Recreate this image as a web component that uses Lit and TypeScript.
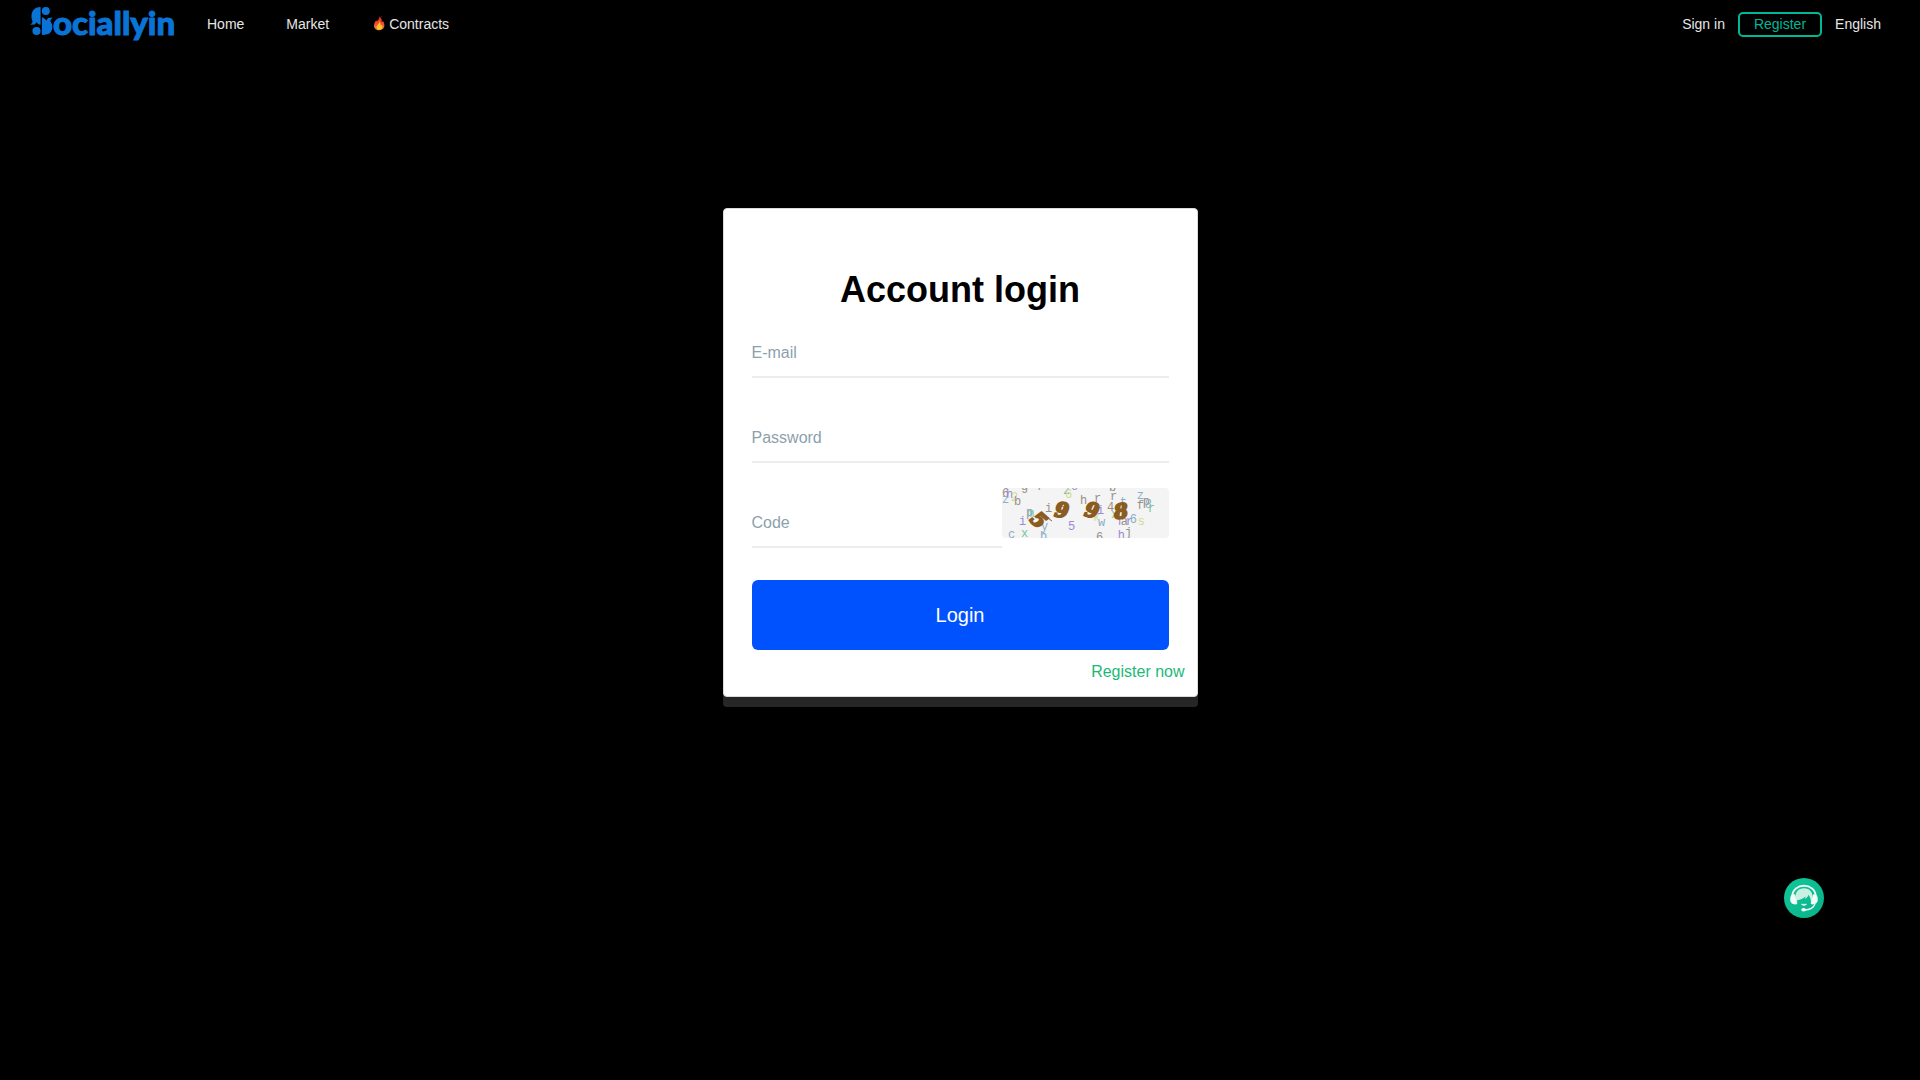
import { LitElement, html, svg, css } from "lit";
import { customElement } from "lit/decorators.js";

type Glyph = [char: string, x: number, y: number, color: string];
type Digit = [char: string, x: number, y: number, angle: number];

const GREY = "#979089";
const PURPLE = "#9c8ad6";
const BLUE = "#8aaec8";
const GREEN = "#76c798";
const YELLOW = "#d2da93";

const NOISE: Glyph[] = [
  ["6", 0, 9, GREY], ["h", 4, 10, PURPLE], ["z", 0, 15, BLUE], ["2", 9, 13, YELLOW],
  ["b", 12, 17, GREY], ["g", 19, 2, GREY], ["r", 35, 2, GREY], ["z", 61, 6, BLUE],
  ["6", 63, 10, YELLOW], ["o", 69, 2, PURPLE], ["h", 78, 16, GREY], ["r", 92, 14, GREY],
  ["r", 108, 12, GREY], ["b", 107, 3, GREY], ["z", 135, 11, BLUE], ["f", 135, 21, GREY],
  ["p", 141, 17, GREY], ["8", 143, 20, BLUE], ["r", 146, 24, GREEN], ["i", 43, 24, GREY],
  ["p", 24, 28, PURPLE], ["m", 25, 29, GREEN], ["i", 17, 37, PURPLE], ["5", 66, 42, PURPLE],
  ["w", 96, 38, BLUE], ["k", 91, 33, YELLOW], ["4", 105, 23, GREY], ["x", 109, 30, GREEN],
  ["t", 118, 18, BLUE], ["f", 115, 37, PURPLE], ["a", 119, 37, GREY], ["r", 124, 37, PURPLE],
  ["6", 128, 35, BLUE], ["s", 136, 37, YELLOW], ["c", 6, 50, BLUE], ["x", 19, 49, GREEN],
  ["b", 38, 52, BLUE], ["y", 39, 42, BLUE], ["6", 94, 53, GREY], ["h", 116, 51, PURPLE],
  ["j", 123, 48, GREY], ["l", 58, 27, PURPLE], ["i", 95, 26, PURPLE],
];

const DIGITS: Digit[] = [
  ["5", 37, 32, 42],
  ["9", 60, 22, 8],
  ["9", 90, 22, 12],
  ["8", 119, 23, -8],
];

@customElement("app-logo")
export class AppLogo extends LitElement {
  static styles = css`
    :host { display: block; }
    svg { display: block; }
    .word {
      font-family: Lato, "Open Sans", sans-serif;
      font-size: 33px;
      font-weight: 900;
      fill: #0a74d6;
      stroke: #0a74d6;
      stroke-width: 1;
    }
  `;
  render() {
    return html`
      <svg width="150" height="48" viewBox="0 0 150 48" role="img" aria-label="Sociallyin">
        <g fill="#0a74d6">
          <path d="M10.6 7V24.8C8.6 24.4 7.4 23.4 6.2 22.2L5 24.4 0 24.8C1.6 23.6 2.3 22.8 2.6 21.4C1 18.3 0.9 13.8 3 10.6C4.8 8 7.4 7 10.6 7Z" />
          <circle cx="15.8" cy="11" r="4" />
          <circle cx="6.5" cy="31" r="4.1" />
          <path d="M11.9 17.2C14 17.6 15.2 19 16.4 20.4L18 18 23 17.6C21.4 18.8 20.6 19.8 20.3 21.2C22.8 24 23 29 20.8 32C19 34.3 16.4 35 11.9 35Z" />
        </g>
        <text class="word" x="23" y="35">ociallyin</text>
      </svg>
    `;
  }
}

@customElement("captcha-image")
export class CaptchaImage extends LitElement {
  static styles = css`
    :host { display: block; }
    svg { display: block; width: 100%; height: 50px; background: #f4f4f4; border-radius: 4px; }
    .noise { font-family: "Liberation Mono", monospace; font-size: 12px; }
    .digit {
      font-family: "DejaVu Serif", serif;
      font-size: 20px;
      font-weight: 700;
      font-style: italic;
      fill: #8a5c20;
      stroke: #8a5c20;
      stroke-width: 2;
      text-anchor: middle;
    }
  `;
  render() {
    return html`
      <svg viewBox="0 0 167 50" role="img" aria-label="Verification code">
        ${NOISE.map(([c, x, y, color]) => svg`<text class="noise" x=${x} y=${y} fill=${color}>${c}</text>`)}
        ${DIGITS.map(([c, x, y, a]) => svg`<text class="digit" x="0" y="7" transform="translate(${x} ${y}) rotate(${a})">${c}</text>`)}
        <path d="M42 27L50 33" stroke="#8a5c20" />
      </svg>
    `;
  }
}

@customElement("app-root")
export class AppRoot extends LitElement {
  static styles = css`
    :host {
      display: flex;
      flex-direction: column;
      min-height: 100vh;
      background: #000;
      font-family: "Liberation Sans", Arial, sans-serif;
      color: #e6e6e6;
    }
    * { box-sizing: border-box; }
    a { color: inherit; text-decoration: none; }
    .header {
      display: flex;
      align-items: center;
      justify-content: space-between;
      height: 48px;
      padding: 0 39px 0 30px;
      font-size: 14px;
      line-height: 21px;
    }
    .brand, .nav, .account { display: flex; align-items: center; }
    .brand { gap: 27px; }
    .nav { gap: 42px; }
    .account { gap: 13px; }
    .hot { display: flex; align-items: center; }
    .register {
      padding: 0 14px;
      border: 2px solid #00b897;
      border-radius: 5px;
      color: #00b897;
    }
    .main { display: flex; justify-content: center; padding: 160px 16px 48px; }
    .card {
      width: 100%;
      max-width: 475px;
      padding: 53px 0 12px;
      border: 1px solid #d8dcdc;
      border-radius: 4px;
      background: #fff;
      box-shadow: 0 10px 0 #262626;
    }
    .title {
      margin: 0;
      color: #000;
      font-size: 36px;
      line-height: 56px;
      text-align: center;
    }
    .form { display: flex; flex-direction: column; gap: 25px; padding: 0 28px; }
    .field {
      width: 100%;
      height: 60px;
      padding: 12px 0 0;
      border: 0;
      border-bottom: 2px solid #ededed;
      border-radius: 0;
      outline: 0;
      background: transparent;
      color: #000;
      font: 16px "Liberation Sans", Arial, sans-serif;
    }
    .field::placeholder { color: #8c9fad; opacity: 1; }
    .code { display: grid; grid-template-columns: 3fr 2fr; align-items: start; }
    .submit {
      height: 70px;
      margin-top: 7px;
      border: 0;
      border-radius: 6px;
      background: #0052ff;
      color: #fff;
      font: 20px "Liberation Sans", Arial, sans-serif;
    }
    .more {
      padding: 10px 12px 0;
      color: #1bb978;
      font-size: 16px;
      line-height: 24px;
      text-align: right;
    }
    .support {
      position: fixed;
      right: 96px;
      bottom: 162px;
      padding: 0;
      border: 0;
      background: none;
    }
    .support svg { display: block; }
  `;

  render() {
    return html`
      <header class="header">
        <div class="brand">
          <a href="#"><app-logo></app-logo></a>
          <nav class="nav">
            <a href="#">Home</a>
            <a href="#">Market</a>
            <a class="hot" href="#">
              <svg width="18" height="18" viewBox="0 0 18 18" aria-hidden="true">
                <defs>
                  <linearGradient id="flame" x1="0" y1="0" x2="0" y2="1">
                    <stop offset="0" stop-color="#d9281b" />
                    <stop offset=".6" stop-color="#f4512c" />
                    <stop offset="1" stop-color="#f59a2c" />
                  </linearGradient>
                </defs>
                <path fill="url(#flame)" d="M8.3 1.2C8.6 3.4 7.5 4.6 6.2 6C5.9 6.5 5.6 6.5 5.2 5.3C3.9 7 3 8.7 3 10.7C3 13.4 5.3 15.2 8.2 15.2C11.3 15.2 13.4 13.2 13.4 10.3C13.4 8.4 12.7 7 11.8 5.8C11.6 6.8 11.3 7.2 10.8 7.3C11.1 4.8 10.2 2.5 8.3 1.2ZM10.2 1L11.2 0.7L11 2Z" />
                <path fill="#fbc52f" d="M8.5 6.2C8.7 8.2 6 9.4 5.7 11.8C5.5 13.7 6.6 14.7 8.3 14.7C10.2 14.7 11.5 13.5 11.2 11.5C11 10.6 10.6 10 10.2 9.6C10.1 10.3 9.9 10.6 9.5 10.8C9.8 9 9.4 7.2 8.5 6.2Z" />
              </svg>
              <span>Contracts</span>
            </a>
          </nav>
        </div>
        <div class="account">
          <a href="#">Sign in</a>
          <a class="register" href="#">Register</a>
          <a href="#">English</a>
        </div>
      </header>

      <main class="main">
        <section class="card">
          <h1 class="title">Account login</h1>
          <form class="form" @submit=${(e: Event) => e.preventDefault()}>
            <input class="field" type="email" placeholder="E-mail" aria-label="E-mail" />
            <input class="field" type="password" placeholder="Password" aria-label="Password" />
            <div class="code">
              <input class="field" type="text" placeholder="Code" aria-label="Code" />
              <captcha-image></captcha-image>
            </div>
            <button class="submit" type="submit">Login</button>
          </form>
          <div class="more"><a href="#">Register now</a></div>
        </section>
      </main>

      <button class="support" type="button" aria-label="Customer support">
        <svg width="40" height="40" viewBox="0 0 40 40" aria-hidden="true">
          <defs>
            <linearGradient id="disc" x1="0" y1="0" x2="1" y2="1">
              <stop offset="0" stop-color="#12c79b" />
              <stop offset="1" stop-color="#08b287" />
            </linearGradient>
          </defs>
          <circle cx="20" cy="20" r="20" fill="url(#disc)" />
          <path d="M8.3 18.5C8.3 4.2 31.7 4.2 31.7 18.5" fill="none" stroke="#e9fbf4" stroke-width="1.8" />
          <path fill="#c9f1e3" d="M11.5 22C10.5 14 14.5 10.2 20 10.2S29.5 14 28.5 22L27 25C27 21 26 19 24.6 16.8C24 18.6 22.6 20.4 20.8 21C21.3 20.2 21.5 19.4 21.5 18.6C19 21 16.5 21.8 13 22.2L13.4 25Z" />
          <path fill="#f2fdf9" d="M7 17.5Q8.6 15.8 11 16.6L13.3 26C10 27.4 6.3 25.4 6.2 21.8Q6.2 19 7 17.5ZM33 17.5Q31.4 15.8 29 16.6L26.7 26C30 27.4 33.7 25.4 33.8 21.8Q33.8 19 33 17.5Z" />
          <path d="M17.2 26.2Q20 29 22.8 26.2Z" fill="#f2fdf9" stroke="#f2fdf9" stroke-width=".4" />
          <path d="M31 26C29.5 30 25.5 31.8 20.5 32" fill="none" stroke="#f2fdf9" stroke-width="1.3" />
          <ellipse cx="19.6" cy="31.8" rx="2.3" ry="1.8" fill="#fff" />
        </svg>
      </button>
    `;
  }
}
